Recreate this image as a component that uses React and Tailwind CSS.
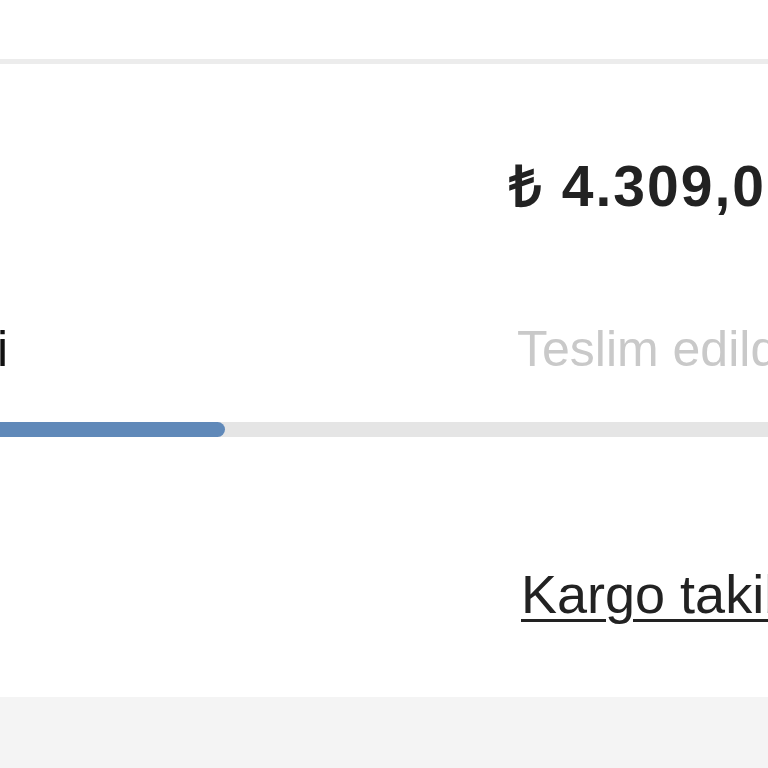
import React from 'react'

const order = {
    price: '₺ 4.309,00',
    current: 'Kargoya verildi',
    next: 'Teslim edildi',
    progress: 525,
}

const OrderCard = () => {
    return (
        <div className='w-[768px] h-[768px] overflow-hidden bg-[#f4f4f4] font-["Liberation_Sans",Arial,sans-serif]'>
            <div className='h-[59px] bg-white' />
            <div className='h-[5px] bg-[#ececec]' />

            <section className='bg-white h-[633px] overflow-hidden'>
                <div className='w-[1200px] -ml-[300px]'>

                    <div className='flex pt-[94px] h-[172px]'>
                        <p className='ml-[809px] whitespace-nowrap text-[57px] leading-none font-bold text-[#222] tracking-[2px]'>
                            {order.price}
                        </p>
                    </div>

                    <div className='flex items-baseline mt-[88px]'>
                        <div className='w-[308px] shrink-0 flex justify-end'>
                            <span className='shrink-0 whitespace-nowrap text-[50px] leading-none text-[#111]'>{order.current}</span>
                        </div>
                        <span className='ml-[509px] whitespace-nowrap text-[50px] leading-none text-[#c9c9c9]'>{order.next}</span>
                    </div>

                    <div className='mt-[48px] h-[15px] w-full bg-[#e5e5e5]'>
                        <div className='h-full rounded-r-full bg-[#6089b9]' style={{ width: order.progress }} />
                    </div>

                    <div className='flex pt-[130px]'>
                        <a href='#' className='ml-[821px] whitespace-nowrap text-[54px] leading-none text-[#222] underline decoration-[3px] underline-offset-[6px]'>
                            Kargo takibi
                        </a>
                    </div>
                </div>
            </section>
        </div>
    )
}

export default function App() {
    return <OrderCard />
}
